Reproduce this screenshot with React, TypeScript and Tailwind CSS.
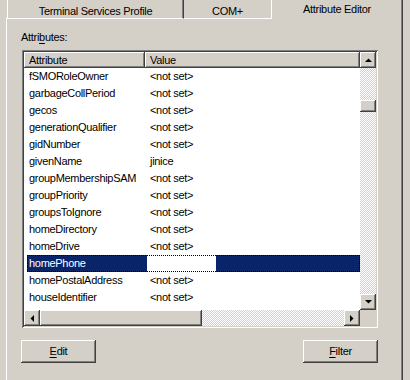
import React from "react";

const raised =
  "bg-[#d4d0c8] shadow-[inset_-1px_-1px_#404040,inset_1px_1px_#ffffff,inset_-2px_-2px_#808080,inset_2px_2px_#d4d0c8]";
const checker =
  "bg-[repeating-conic-gradient(#d4d0c8_0_25%,#ffffff_0_50%)] bg-[length:2px_2px]";

const rows: [string, string][] = [
  ["fSMORoleOwner", "<not set>"],
  ["garbageCollPeriod", "<not set>"],
  ["gecos", "<not set>"],
  ["generationQualifier", "<not set>"],
  ["gidNumber", "<not set>"],
  ["givenName", "jinice"],
  ["groupMembershipSAM", "<not set>"],
  ["groupPriority", "<not set>"],
  ["groupsToIgnore", "<not set>"],
  ["homeDirectory", "<not set>"],
  ["homeDrive", "<not set>"],
  ["homePhone", ""],
  ["homePostalAddress", "<not set>"],
  ["houseIdentifier", "<not set>"],
];

function Arrow({ dir }: { dir: "up" | "down" | "left" | "right" }) {
  const pts: Record<string, string> = {
    up: "0,4 7,4 3.5,0.5",
    down: "0,0 7,0 3.5,3.5",
    left: "4,0 4,7 0.5,3.5",
    right: "0,0 0,7 3.5,3.5",
  };
  const vertical = dir === "up" || dir === "down";
  return (
    <svg width={vertical ? 7 : 4} height={vertical ? 4 : 7} className="block">
      <polygon points={pts[dir]} fill="#000" />
    </svg>
  );
}

function SBtn({ dir }: { dir: "up" | "down" | "left" | "right" }) {
  return (
    <div className={`w-[16px] h-[16px] flex items-center justify-center shrink-0 ${raised}`}>
      <Arrow dir={dir} />
    </div>
  );
}

export default function App() {
  return (
    <div className="w-[410px] h-[380px] bg-[#d4d0c8] overflow-hidden font-['Liberation_Sans',Arial,sans-serif] text-[11px] tracking-[-0.3px] text-black leading-[13px]">
      {/* tab strip */}
      <div className="flex h-[19px] pl-[6px]">
        <div className="w-[1px] border-b border-white" />
        <div className="w-[177px] border-l border-white border-r border-r-[#404040] border-b border-b-white flex justify-center pt-[5px] shadow-[inset_-1px_0_#808080]">
          Terminal Services Profile
        </div>
        <div className="w-[87px] border-b border-white flex justify-center pt-[5px]">COM+</div>
        <div className="w-[132px] border-l border-white border-r border-r-[#404040] flex justify-center pt-[3px] shadow-[inset_-1px_0_#808080]">
          Attribute Editor
        </div>
      </div>

      {/* panel */}
      <div className="w-[397px] h-[361px] ml-[6px] border-l border-white border-r border-r-[#404040] shadow-[inset_-1px_0_#808080] pl-[15px] pt-[12px]">
        <div className="-ml-px">
          Attri<span className="underline underline-offset-2">b</span>utes:
        </div>

        {/* list view */}
        <div className="mt-[6px] w-[356px] h-[278px] p-[2px] bg-white shadow-[inset_1px_1px_#808080,inset_-1px_-1px_#ffffff,inset_2px_2px_#404040,inset_-2px_-2px_#d4d0c8] flex flex-col">
          <div className="flex h-[258px]">
            <div className="w-[336px] flex flex-col bg-white">
              <div className="flex h-[16px] shrink-0">
                <div className={`w-[121px] pl-[5px] flex items-center bg-[#d4d0c8] shadow-[inset_-1px_-1px_#404040,inset_1px_1px_#ffffff,inset_-2px_-2px_#808080]`}>
                  Attribute
                </div>
                <div className={`flex-1 pl-[5px] flex items-center bg-[#d4d0c8] shadow-[inset_-1px_-1px_#404040,inset_1px_1px_#ffffff,inset_-2px_-2px_#808080]`}>
                  Value
                </div>
              </div>
              {rows.map(([a, v]) =>
                a === "homePhone" ? (
                  <div key={a} className="h-[17px] flex pl-[3px] shrink-0">
                    <div className="flex flex-1 outline-1 outline-dotted outline-black -outline-offset-1">
                      <div className="w-[120px] bg-[#0a246a] text-white pl-[2px] flex items-center">{a}</div>
                      <div className="w-[69px] bg-white" />
                      <div className="flex-1 bg-[#0a246a]" />
                    </div>
                  </div>
                ) : (
                  <div key={a} className="h-[17px] flex items-center shrink-0">
                    <div className="w-[121px] pl-[5px]">{a}</div>
                    <div className="pl-[5px]">{v}</div>
                  </div>
                )
              )}
            </div>
            <div className="w-[16px] flex flex-col">
              <SBtn dir="up" />
              <div className={`flex-1 ${checker} pt-[32px]`}>
                <div className={`h-[12px] w-[16px] ${raised}`} />
              </div>
              <SBtn dir="down" />
            </div>
          </div>
          <div className="flex h-[16px]">
            <SBtn dir="left" />
            <div className={`w-[162px] h-[16px] ${raised}`} />
            <div className={`flex-1 ${checker}`} />
            <SBtn dir="right" />
            <div className="w-[16px] bg-[#d4d0c8]" />
          </div>
        </div>

        {/* buttons */}
        <div className="mt-[12px] w-[357px] -ml-px flex justify-between">
          <div className={`w-[75px] h-[23px] flex items-center justify-center ${raised}`}>
            <span>
              <span className="underline underline-offset-2">E</span>dit
            </span>
          </div>
          <div className={`w-[75px] h-[23px] flex items-center justify-center ${raised}`}>
            <span>
              <span className="underline underline-offset-2">F</span>ilter
            </span>
          </div>
        </div>
      </div>
    </div>
  );
}
